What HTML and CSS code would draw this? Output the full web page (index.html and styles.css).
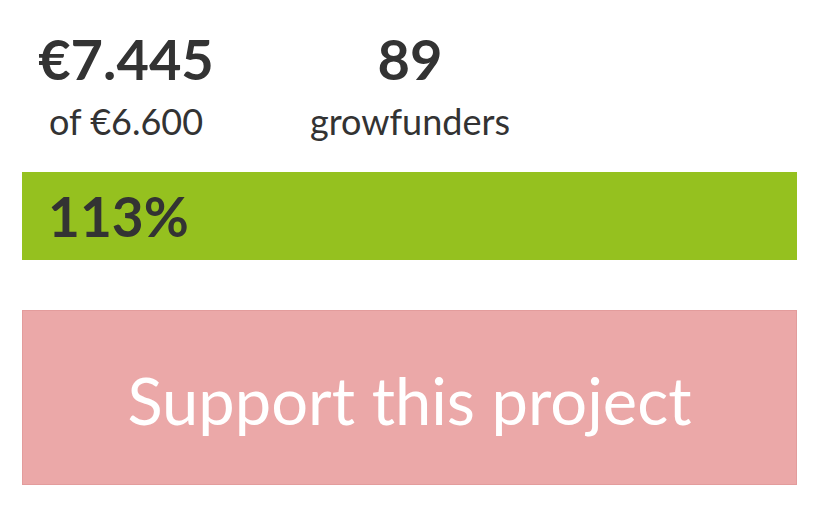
FILE: index.html
```html
<!DOCTYPE html>
<html lang="en">
<head>
    <meta charset="UTF-8">
    <title>Project funding</title>
    <link rel="stylesheet" href="styles.css">
</head>
<body>
    <div class="funding">
        <div class="stats">
            <div class="stat">
                <div class="stat-value">€7.445</div>
                <div class="stat-label">of €6.600</div>
            </div>
            <div class="stat">
                <div class="stat-value">89</div>
                <div class="stat-label">growfunders</div>
            </div>
        </div>
        <div class="progress">
            <span class="progress-text">113%</span>
        </div>
        <a class="support" href="#">Support this project</a>
    </div>
</body>
</html>
```

FILE: styles.css
```css
*{
    padding: 0;
    margin: 0;
    box-sizing: border-box;
}
body{
    background: #fff;
    font-family: Lato, "Open Sans", sans-serif;
    color: #333;
}
.funding{
    width: 775px;
    margin: 0 0 0 22px;
    padding-top: 24px;
}
.stats{
    display: flex;
    gap: 76px;
}
.stat{
    width: 208px;
    text-align: center;
}
.stat-value{
    font-size: 56px;
    font-weight: 700;
    line-height: 70px;
}
.stat-label{
    margin-top: 7px;
    font-size: 36px;
    line-height: 40px;
}
.progress{
    margin-top: 31px;
    height: 88px;
    background: #95c11f;
    display: flex;
    align-items: center;
    padding-left: 26px;
}
.progress-text{
    font-size: 55px;
    font-weight: 700;
}
.support{
    display: flex;
    align-items: center;
    justify-content: center;
    margin-top: 50px;
    height: 175px;
    padding-top: 4px;
    background: #eba8a8;
    border: 1px solid #e39c9c;
    color: #fff;
    font-size: 65px;
    text-decoration: none;
}
```
